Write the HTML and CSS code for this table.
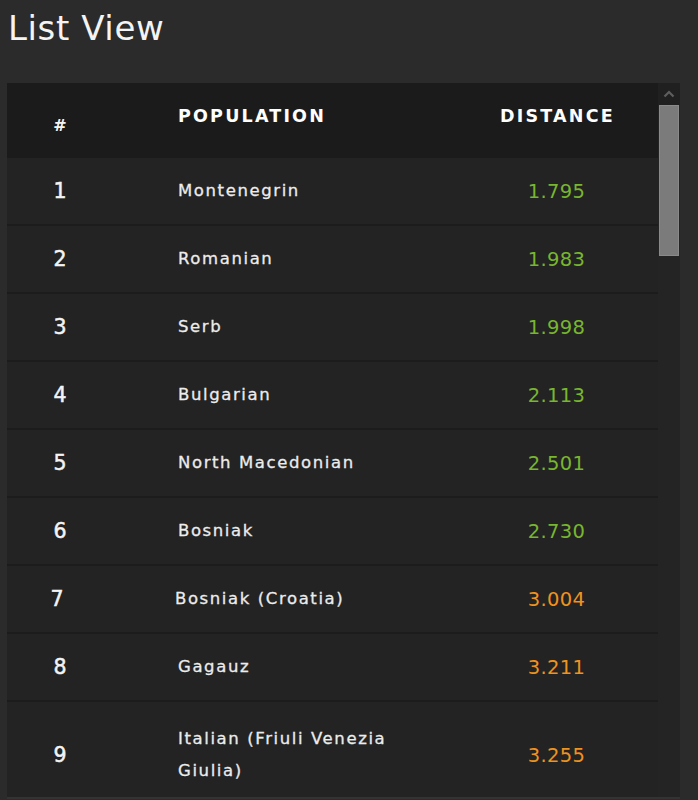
FILE: index.html
```html
<!DOCTYPE html>
<html lang="en">
<head>
<meta charset="utf-8">
<title>List View</title>
<link rel="stylesheet" href="styles.css">
</head>
<body>
<h1 class="title">List View</h1>
<div class="panel">
  <div class="table">
    <div class="row head">
      <div class="c-num">#</div>
      <div class="c-name">POPULATION</div>
      <div class="c-dist">DISTANCE</div>
    </div>
    <div class="row">
      <div class="c-num">1</div>
      <div class="c-name">Montenegrin</div>
      <div class="c-dist green">1.795</div>
    </div>
    <div class="row">
      <div class="c-num">2</div>
      <div class="c-name">Romanian</div>
      <div class="c-dist green">1.983</div>
    </div>
    <div class="row">
      <div class="c-num">3</div>
      <div class="c-name">Serb</div>
      <div class="c-dist green">1.998</div>
    </div>
    <div class="row">
      <div class="c-num">4</div>
      <div class="c-name">Bulgarian</div>
      <div class="c-dist green">2.113</div>
    </div>
    <div class="row">
      <div class="c-num">5</div>
      <div class="c-name">North Macedonian</div>
      <div class="c-dist green">2.501</div>
    </div>
    <div class="row">
      <div class="c-num">6</div>
      <div class="c-name">Bosniak</div>
      <div class="c-dist green">2.730</div>
    </div>
    <div class="row shifted">
      <div class="c-num">7</div>
      <div class="c-name">Bosniak (Croatia)</div>
      <div class="c-dist orange">3.004</div>
    </div>
    <div class="row">
      <div class="c-num">8</div>
      <div class="c-name">Gagauz</div>
      <div class="c-dist orange">3.211</div>
    </div>
    <div class="row tall">
      <div class="c-num">9</div>
      <div class="c-name">Italian (Friuli Venezia Giulia)</div>
      <div class="c-dist orange">3.255</div>
    </div>
  </div>
  <div class="scrollbar">
    <div class="sb-btn">
      <svg width="12" height="8" viewBox="0 0 12 8"><path d="M1.5 6.5 L6 2 L10.5 6.5" fill="none" stroke="#5e5e5e" stroke-width="2.2"/></svg>
    </div>
    <div class="sb-thumb"></div>
  </div>
</div>
</body>
</html>
```

FILE: styles.css
```css
html, body {
  margin: 0;
  padding: 0;
}
body {
  background: #2b2b2b;
  width: 698px;
  height: 800px;
  overflow: hidden;
  font-family: "DejaVu Sans", "Liberation Sans", sans-serif;
  color: #ececec;
}
.title {
  margin: 0;
  padding: 7px 0 0 8px;
  height: 83px;
  box-sizing: border-box;
  font-size: 34px;
  font-weight: normal;
  line-height: 42px;
  color: #f4f4f4;
  letter-spacing: 0.6px;
}
.panel {
  margin-left: 7px;
  width: 673px;
  height: 714px;
  display: flex;
  background: #232323;
  border-bottom: 2px solid #333;
}
.table {
  flex: 1;
  overflow: hidden;
}
.row {
  display: grid;
  grid-template-columns: 106px 342px 1fr;
  align-items: center;
  height: 68px;
  background: #232323;
  border-bottom: 2px solid #1c1c1c;
  box-sizing: border-box;
}
.row.head {
  height: 75px;
  background: #1b1b1b;
  border-bottom: 0;
  color: #fff;
}
.head .c-name, .head .c-dist {
  font-weight: bold;
  font-size: 17.5px;
  letter-spacing: 2.2px;
  padding-bottom: 9px;
  -webkit-text-stroke: 0;
}
.head .c-dist {
  padding-left: 2px;
}
.head .c-num {
  font-weight: bold;
  font-size: 16px;
  padding-top: 9px;
  -webkit-text-stroke: 0;
}
.c-num {
  text-align: center;
  font-size: 20.5px;
  color: #f4f4f4;
  -webkit-text-stroke: 0.5px #f4f4f4;
}
.c-name {
  padding-left: 65px;
  padding-right: 60px;
  font-size: 16.5px;
  letter-spacing: 1.6px;
  line-height: 32px;
  -webkit-text-stroke: 0.3px #ececec;
}
.c-dist {
  text-align: center;
  font-size: 19.5px;
  letter-spacing: 0.3px;
}
.shifted .c-num {
  padding-right: 6px;
}
.shifted .c-name {
  padding-left: 62px;
}
.row.tall {
  height: 108px;
}
.green { color: #78b62f; }
.orange { color: #f0921e; }
.scrollbar {
  width: 22px;
  display: flex;
  flex-direction: column;
  background: #242424;
}
.sb-btn {
  height: 22px;
  display: flex;
  align-items: center;
  justify-content: center;
  background: #202020;
}
.sb-thumb {
  margin: 0 1px;
  height: 151px;
  background: #7b7b7b;
  border: 1px solid #8a8a8a;
  box-sizing: border-box;
}
```
